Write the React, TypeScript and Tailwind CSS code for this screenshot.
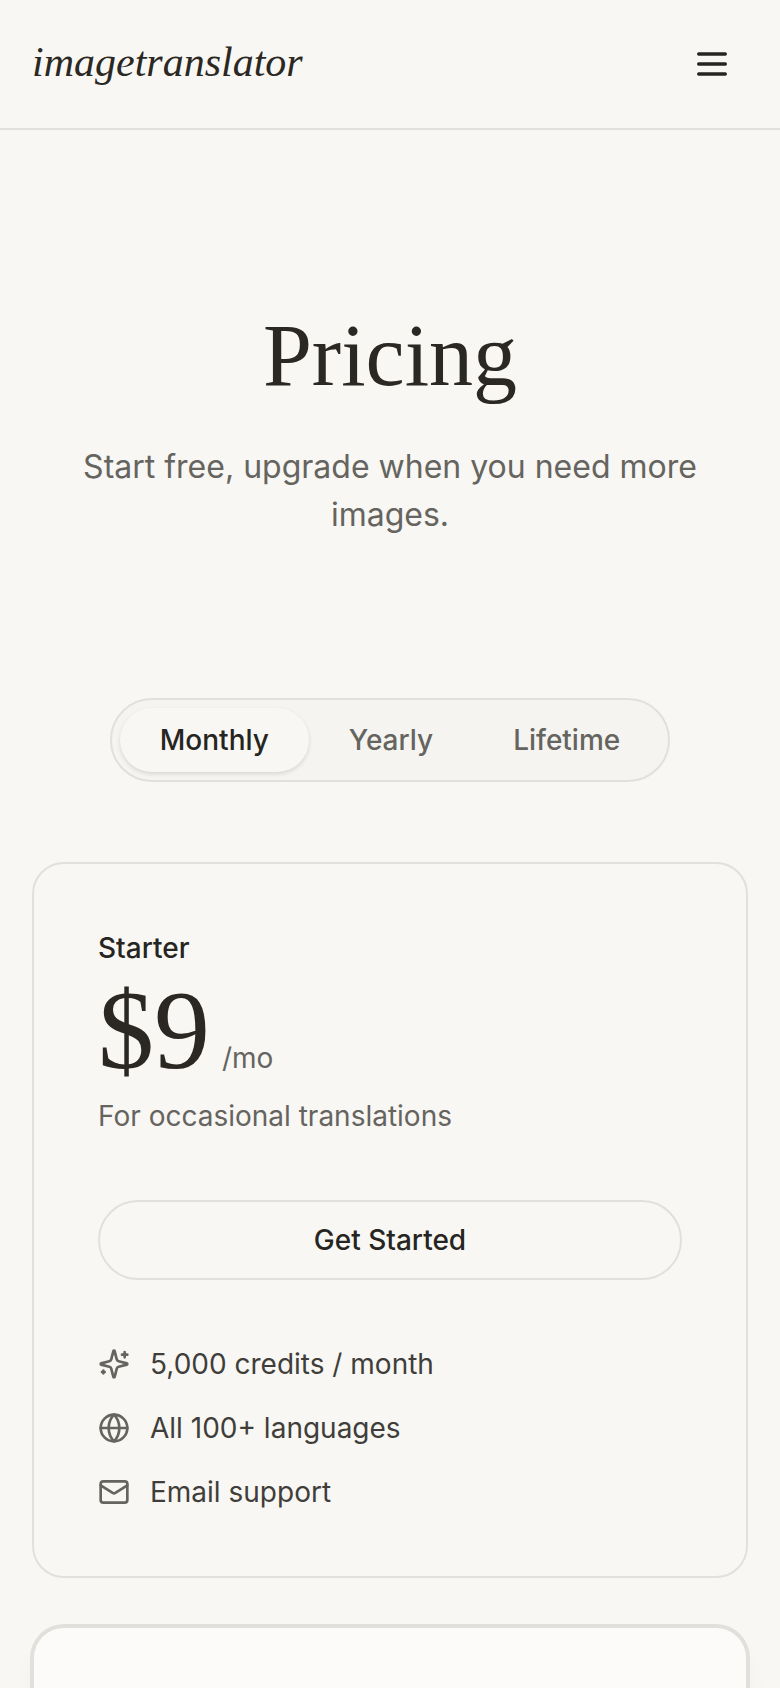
import { useState } from "react";
import { Globe, Mail } from "lucide-react";

const periods = ["Monthly", "Yearly", "Lifetime"];

function MenuIcon() {
  return (
    <svg width="40" height="40" viewBox="0 0 24 24" fill="none" stroke="currentColor" strokeWidth="2" strokeLinecap="round" aria-hidden="true">
      <path d="M4 6h16M4 12h16M4 18h16" />
    </svg>
  );
}

function SparklesIcon() {
  return (
    <svg
      className="size-8 shrink-0 text-[#65645f]"
      viewBox="0 0 24 24"
      fill="none"
      stroke="currentColor"
      strokeWidth="2"
      strokeLinecap="round"
      strokeLinejoin="round"
      aria-hidden="true"
    >
      <path d="M9.937 15.5A2 2 0 0 0 8.5 14.063l-6.135-1.582a.5.5 0 0 1 0-.962L8.5 9.936A2 2 0 0 0 9.937 8.5l1.582-6.135a.5.5 0 0 1 .963 0L14.063 8.5A2 2 0 0 0 15.5 9.937l6.135 1.581a.5.5 0 0 1 0 .964L15.5 14.063a2 2 0 0 0-1.437 1.437l-1.582 6.135a.5.5 0 0 1-.963 0z" />
      <path d="M20 3v4M22 5h-4M4 17v2M5 18H3" />
    </svg>
  );
}

export default function App() {
  const [period, setPeriod] = useState("Monthly");

  return (
    <div className="min-h-screen bg-[#f8f7f3] font-['Inter','Liberation_Sans',sans-serif] text-[28px] leading-10 text-[#262522]">
      <header className="flex items-center justify-between border-b-2 border-[#e1e0dc] px-8 py-7">
        <a href="#" className="pb-1 font-['Liberation_Serif',serif] text-[42px] leading-[60px] italic text-[#2b2723]">
          imagetranslator
        </a>
        <button type="button" aria-label="Open menu" className="flex size-[72px] items-center justify-center">
          <MenuIcon />
        </button>
      </header>

      <main className="px-8 pb-24">
        {/* Heading */}
        <section className="pt-[182px] text-center">
          <h1 className="font-['Liberation_Serif',serif] text-[88px] leading-[88px] text-[#2b2723]">Pricing</h1>
          <p className="mt-[43px] px-8 text-[32px] leading-12 text-[#65645f]">
            Start free, upgrade when you need more images.
          </p>
        </section>

        {/* Billing period */}
        <div className="mt-[159px] flex justify-center">
          <div className="flex rounded-full border-2 border-[#e1e0dc] bg-[#f5f4f0] p-2">
            {periods.map((p) => (
              <button
                key={p}
                type="button"
                aria-pressed={p === period}
                onClick={() => setPeriod(p)}
                className={
                  p === period
                    ? "h-16 rounded-full bg-[#f8f7f3] px-10 font-medium shadow-[0_2px_4px_rgba(0,0,0,0.12)]"
                    : "h-16 rounded-full px-10 font-medium text-[#65645f]"
                }
              >
                {p}
              </button>
            ))}
          </div>
        </div>

        {/* Plans */}
        <div className="mt-20 flex flex-col gap-12">
          <article className="rounded-4xl border-2 border-[#e1e0dc] p-16">
            <h2 className="font-medium">Starter</h2>
            <div className="flex items-baseline gap-3 pb-1">
              <span className="font-['Liberation_Serif',serif] text-[112px] leading-[124px] text-[#2b2723]">$9</span>
              <span className="text-[#65645f]">/mo</span>
            </div>
            <p className="text-[#65645f]">For occasional translations</p>
            <button type="button" className="mt-16 h-20 w-full rounded-full border-2 border-[#e1e0dc] font-medium">
              Get Started
            </button>
            <ul className="mt-16 flex flex-col gap-6 text-[#3f3e3a]">
              <li className="flex items-center gap-5">
                <SparklesIcon />
                5,000 credits / month
              </li>
              <li className="flex items-center gap-5">
                <Globe className="size-8 shrink-0 text-[#65645f]" />
                All 100+ languages
              </li>
              <li className="flex items-center gap-5">
                <Mail className="size-8 shrink-0 text-[#65645f]" />
                Email support
              </li>
            </ul>
          </article>

          <article className="min-h-[640px] rounded-4xl border-2 border-[#e1e0dc] bg-[#fcfbf9] p-16 shadow-[0_0_0_2px_#e1e0dc,0_20px_30px_-6px_rgba(0,0,0,0.05)]" />
        </div>
      </main>
    </div>
  );
}
